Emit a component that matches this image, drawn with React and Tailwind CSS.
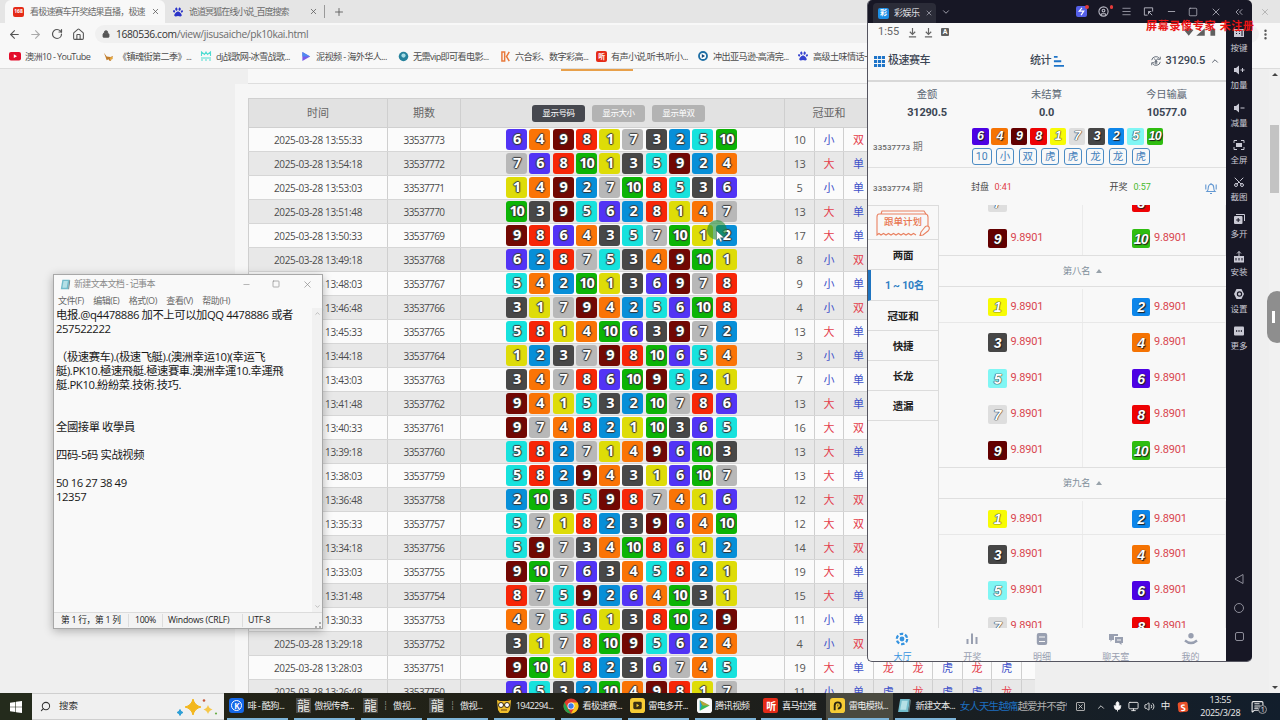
import React from 'react';
import {
  ArrowLeft, ArrowRight, RotateCw, House, Lock, X, Plus, Minus, Square, ChevronDown, ChevronUp, ChevronsLeft,
  Menu, Search, CircleUser, Mic, Volume2, Scissors, MoreVertical, Monitor, MessageSquareText,
} from 'lucide-react';
import { FaPaw } from 'react-icons/fa';

const DRAWS = [
  [6, 4, 9, 8, 1, 7, 3, 2, 5, 10],
  [7, 6, 8, 10, 1, 3, 5, 9, 2, 4],
  [1, 4, 9, 2, 7, 10, 8, 5, 3, 6],
  [10, 3, 9, 5, 6, 2, 8, 1, 4, 7],
  [9, 8, 6, 4, 3, 5, 7, 10, 1, 2],
  [6, 2, 8, 7, 5, 3, 4, 9, 10, 1],
  [5, 4, 2, 10, 1, 3, 6, 9, 7, 8],
  [3, 1, 7, 9, 4, 2, 5, 6, 10, 8],
  [5, 8, 1, 4, 10, 6, 3, 9, 7, 2],
  [1, 2, 3, 7, 9, 8, 10, 6, 5, 4],
  [3, 4, 7, 8, 6, 10, 9, 5, 2, 1],
  [9, 4, 1, 5, 3, 2, 10, 7, 8, 6],
  [9, 7, 4, 8, 2, 1, 10, 3, 6, 5],
  [5, 8, 2, 7, 1, 4, 9, 6, 10, 3],
  [5, 8, 2, 9, 4, 3, 1, 6, 10, 7],
  [2, 10, 3, 5, 9, 8, 7, 4, 1, 6],
  [5, 7, 1, 8, 2, 3, 9, 6, 4, 10],
  [5, 9, 7, 3, 4, 10, 8, 6, 1, 2],
  [9, 10, 7, 6, 3, 4, 5, 8, 2, 1],
  [8, 7, 5, 9, 2, 6, 4, 10, 3, 1],
  [4, 7, 5, 6, 1, 3, 8, 10, 2, 9],
  [3, 1, 7, 8, 10, 9, 5, 6, 2, 4],
  [9, 10, 1, 8, 2, 3, 6, 7, 4, 5],
  [6, 5, 3, 2, 10, 4, 9, 8, 1, 7],
];

const WEB_BALL = {
  1: 'bg-[#dedc08]', 2: 'bg-[#078fd8]', 3: 'bg-[#484848]', 4: 'bg-[#fa7406]', 5: 'bg-[#17e2dd]',
  6: 'bg-[#5234f5]', 7: 'bg-[#b8b8b8]', 8: 'bg-[#f72607]', 9: 'bg-[#720803]', 10: 'bg-[#0cb406]',
};

const APP_BALL = {
  1: 'bg-[#f7fb05]', 2: 'bg-[#0d86ea]', 3: 'bg-[#464646]', 4: 'bg-[#f57303]', 5: 'bg-[#80f6f4]',
  6: 'bg-[#4c02e4]', 7: 'bg-[#dedede]', 8: 'bg-[#ee0204]', 9: 'bg-[#630000]', 10: 'bg-[#2fbd10]',
};

const OUTLINE = '[text-shadow:0_0_1px_#333,1px_0_1px_#333,-1px_0_1px_#444,0_1px_1px_#333,0_-1px_1px_#444]';

// a draw every 75 seconds, newest first
function drawTime(i) {
  const t = 13 * 3600 + 55 * 60 + 33 - i * 75;
  const pad = (n) => String(n).padStart(2, '0');
  return `2025-03-28 ${pad(Math.floor(t / 3600))}:${pad(Math.floor(t / 60) % 60)}:${pad(t % 60)}`;
}

function Mark({ text, red }) {
  return <span className={red ? 'text-[#e4404c]' : 'text-[#3f51c9]'}>{text}</span>;
}

function Cell({ className, children }) {
  return <div className={`flex h-full shrink-0 items-center justify-center border-r border-[#cfcfcf] pt-px ${className}`}>{children}</div>;
}

function DrawRow({ balls, index }) {
  const sum = balls[0] + balls[1];
  return (
    <div className={`flex h-6 border-b border-[#d6d6d6] text-[10px] text-[#555] ${index % 2 ? 'bg-[#e8e8e8]' : 'bg-[#fbfbfb]'}`}>
      <Cell className="w-[140px] border-l tracking-[-0.33px] text-[#4c4c4c]">{drawTime(index)}</Cell>
      <Cell className="w-[73px] tracking-[-0.62px] text-[#4c4c4c]">{33537773 - index}</Cell>
      <Cell className="w-[324px] justify-start! pt-0! pl-[45px]">
        <div className="flex gap-[2.3px]">
          {balls.map((n) => (
            <span key={n} className={`flex size-[21px] items-center justify-center rounded-[3px] text-[14.5px] leading-none font-bold tracking-[-1.2px] text-white ${OUTLINE} ${WEB_BALL[n]}`}>{n}</span>
          ))}
        </div>
      </Cell>
      <Cell className="w-[30px] text-[11px] tracking-[-0.5px]">{sum}</Cell>
      <Cell className="w-[29px] text-[11px]"><Mark text={sum > 11 ? '大' : '小'} red={sum > 11} /></Cell>
      <Cell className="w-[30px] text-[11px]"><Mark text={sum % 2 ? '单' : '双'} red={sum % 2 === 0} /></Cell>
      {[0, 1, 2, 3, 4].map((k) => (
        <Cell key={k} className="w-[29.6px] text-[11px]">
          <Mark text={balls[k] > balls[9 - k] ? '龙' : '虎'} red={balls[k] > balls[9 - k]} />
        </Cell>
      ))}
    </div>
  );
}

function HeadButton({ children, active }) {
  return (
    <span className={`flex h-[17px] w-[53px] items-center justify-center rounded-[3px] text-[8.5px] tracking-[-0.4px] text-white ${active ? 'bg-[#46484f]' : 'bg-[#b3b3b3]'}`}>
      {children}
    </span>
  );
}

function YoutubeIcon() {
  return (
    <svg viewBox="0 0 12 12" className="size-[12px]"><rect y="2" width="12" height="8.4" rx="2" fill="#e30d2b" /><path d="M4.8 4.3v3.8L8 6.2z" fill="#fff" /></svg>
  );
}

function RedBadge({ children, className = 'size-[11px] text-[7px]' }) {
  return <span className={`flex items-center justify-center rounded-[2px] bg-[#e52b18] leading-none font-bold text-white ${className}`}>{children}</span>;
}

const BOOKMARKS = [
  { w: 'w-[94px]', gap: 'gap-[4px]', text: '澳洲10 - YouTube', icon: <YoutubeIcon /> },
  {
    w: 'w-[97px]', gap: 'gap-[4px]', text: '《镇魂街第二季》...',
    icon: <svg viewBox="0 0 12 12" className="size-[11px]"><path d="M1 2l3 4 4 .5 3-1-1 2-2 1 1 2H7L6 9 4 10 3 7z" fill="#c07a28" /><circle cx="9" cy="8" r="1.5" fill="#e4a63c" /></svg>,
  },
  {
    w: 'w-[101px]', gap: 'gap-[4px]', text: 'dj战歌网-冰雪战歌...',
    icon: <svg viewBox="0 0 12 12" className="size-[12px]" fill="none" stroke="#4fdcd2" strokeWidth="1.1"><path d="M1.500 6V2l3 2.500 1.500-2.500 1.500 2.500 3-2.500v4M1 10h2M5 10h2M9 10h2M1 8h10" /></svg>,
  },
  {
    w: 'w-[97px]', gap: 'gap-[4px]', text: '泥视频 - 海外华人...',
    icon: <svg viewBox="0 0 12 12" className="size-[11px]"><path d="M1.5 1v10L10 6z" fill="#7a5be8" /><path d="M1.5 1v5H10z" fill="#4c8cf0" /></svg>,
  },
  {
    w: 'w-[103px]', gap: 'gap-[4px]', text: '无需vip即可看电影...',
    icon: <svg viewBox="0 0 12 12" className="size-[11px]"><circle cx="6" cy="6" r="5.2" fill="#26829c" /><circle cx="6" cy="5" r="2.3" fill="#a6dce6" /></svg>,
  },
  {
    w: 'w-[95px]', gap: 'gap-[3px]', text: '六合彩、数字彩高...',
    icon: <svg viewBox="0 0 12 12" className="size-[11px]" fill="none" stroke="#e8793b" strokeWidth="1.6"><path d="M1 1v10h3V1zM9 1L6 6l3 5" /></svg>,
  },
  { w: 'w-[102px]', gap: 'gap-[4px]', text: '有声小说,听书,听小...', icon: <RedBadge>听</RedBadge> },
  {
    w: 'w-[100px]', gap: 'gap-[5px]', text: '冲出亚马逊-高清完...',
    icon: <svg viewBox="0 0 12 12" className="size-[10px]"><circle cx="6" cy="6" r="4.8" fill="#fff" stroke="#1f6fa5" strokeWidth="2.2" /><path d="M4.6 3.6v4.8L8.4 6z" fill="#174a7a" /></svg>,
  },
  { w: 'w-[80px]', gap: 'gap-[5px]', text: '高级土味情话一', icon: <FaPaw className="size-[10px] shrink-0 text-[#3542cf]" /> },
];

function Browser() {
  return (
    <div className="flex h-[693px] w-full flex-col bg-[#efefef]">
      <div className="flex h-[23px] shrink-0 items-center bg-[#e5e5e5] text-[9px] text-[#6a6a6a]">
        <div className="ml-[5px] flex h-full w-[160px] items-center rounded-t-md bg-[#f8f8f8] pl-2">
          <RedBadge className="h-[10px] w-[11px] text-[5px]">168</RedBadge>
          <span className="ml-[6px] w-[118px] tracking-[-0.8px] whitespace-nowrap">看极速赛车开奖结果直播，极速</span>
          <X className="ml-[3px] size-[9px] text-[#555]" />
        </div>
        <FaPaw className="ml-[8px] size-[10px] text-[#2a33c8]" />
        <span className="ml-[6px] w-[120px] tracking-[-0.95px] whitespace-nowrap">诡道冥狐在线小说_百度搜索</span>
        <X className="size-[9px] text-[#555]" />
        <span className="ml-[6px] h-[13px] w-px bg-[#999]" />
        <Plus className="ml-[8px] size-[12px] text-[#555]" strokeWidth={1.7} />
        <X className="mr-[10px] ml-auto size-[10px] text-[#999]" strokeWidth={1.5} />
      </div>
      <div className="flex h-[22px] shrink-0 items-center bg-[#f8f8f8] text-[#555]">
        <ArrowLeft className="ml-[8px] size-[13px]" />
        <ArrowRight className="ml-[8px] size-[13px] text-[#aaa]" />
        <RotateCw className="ml-[9px] size-[12px]" strokeWidth={2.4} />
        <House className="ml-[9px] size-[13px]" />
        <div className="ml-[10px] flex h-[18px] flex-1 items-center rounded-full bg-[#f0f0f0] pl-[7px]">
          <Lock className="size-[8px]" fill="currentColor" strokeWidth={2.5} />
          <span className="ml-[6px] pt-px text-[10.3px] tracking-[-0.35px] text-[#333]">1680536.com<span className="text-[#6c6c6c]">/view/jisusaiche/pk10kai.html</span></span>
        </div>
        <MoreVertical className="mr-[8px] size-[13px]" strokeWidth={2.5} />
      </div>
      <div className="flex h-[24px] shrink-0 items-center border-b border-[#dcdcdc] bg-[#f8f8f8] pl-[9px] text-[9.1px] tracking-[-0.6px] text-[#4c4c4c]">
        {BOOKMARKS.map((b) => (
          <div key={b.text} className={`flex shrink-0 items-center whitespace-nowrap ${b.w} ${b.gap}`}>{b.icon}<span>{b.text}</span></div>
        ))}
      </div>
      <div className="flex min-h-0 flex-1">
        <div className="ml-[235px] flex min-h-0 w-[800px] flex-col">
          <div className="ml-[13px] h-[15px] shrink-0 border-b border-[#dedede] bg-[#f8f8f8]">
            <div className="ml-[313px] h-[2px] w-[72px] bg-[#e8a04a]" />
          </div>
          <div className="min-h-0 flex-1 overflow-hidden bg-[#f6f6f6] pt-[14px] pl-[13px]">
            <div className="flex h-[30px] border-y border-[#d0d0d0] bg-[#e2e2e2] text-[11px] text-[#666]">
              <Cell className="w-[140px] border-l">时间</Cell>
              <Cell className="w-[73px]">期数</Cell>
              <Cell className="w-[324px] justify-start! gap-[7px] pl-[71px]">
                <HeadButton active>显示号码</HeadButton>
                <HeadButton>显示大小</HeadButton>
                <HeadButton>显示单双</HeadButton>
              </Cell>
              <Cell className="w-[89px]">冠亚和</Cell>
            </div>
            {DRAWS.map((balls, i) => <DrawRow key={i} balls={balls} index={i} />)}
          </div>
        </div>
        <div className="ml-auto flex w-[11px] flex-col items-center justify-between bg-[#f1f1f1] py-[4px]">
          <span className="border-x-[3px] border-b-[3px] border-x-transparent border-b-[#444]" />
          <span className="-mt-[444px] h-[68px] w-[9px] bg-[#c3c3c3]" />
          <span className="border-x-[3px] border-t-[3px] border-x-transparent border-t-[#444]" />
        </div>
      </div>
    </div>
  );
}

const NOTE_LINES = [
  '电报.@q4478886 加不上可以加QQ 4478886 或者', '257522222', '', '（极速赛车).(极速飞艇).(澳洲幸运10)(幸运飞',
  '艇).PK10.極速飛艇.極速賽車.澳洲幸運10.幸運飛', '艇.PK10.紛紛菜.技術.技巧.', '', '', '全國接單 收學員', '',
  '四码-5码 实战视频', '', '50 16 27 38 49', '12357',
];

function NoteIcon({ className }) {
  return (
    <svg viewBox="0 0 14 14" className={className}><path d="M3 1h9l-1.5 12H1z" fill="#72bccb" /><path d="M4.5 2.5H10L8.5 11H3z" fill="#b4e0e6" /><path d="M12 1l1 1-1.5 11h-1z" fill="#687c80" /></svg>
  );
}

function Notepad() {
  return (
    <div className="absolute top-[274px] left-[53px] flex h-[355px] w-[270px] flex-col border border-[#a8a8a8] bg-[#f9f9f9] shadow-[0_2px_9px_rgba(0,0,0,0.28)]">
      <div className="flex h-[18px] items-center text-[9px] text-[#8a8a8a]">
        <NoteIcon className="ml-[6px] size-[11px]" />
        <span className="ml-[3px] tracking-[-0.65px]">新建文本文档 - 记事本</span>
        <Minus className="ml-auto size-[9px]" strokeWidth={1.6} />
        <Square className="ml-[21px] size-[8px]" strokeWidth={2} />
        <X className="mr-[9px] ml-[22px] size-[11px]" strokeWidth={1.5} />
      </div>
      <div className="flex h-[15px] items-center gap-[9.5px] pl-[4px] text-[9px] tracking-[-0.45px] text-[#666]">
        <span>文件(F)</span><span>编辑(E)</span><span>格式(O)</span><span>查看(V)</span><span>帮助(H)</span>
      </div>
      <div className="flex flex-1">
        <div className="flex-1 pl-[2px] text-[11.3px] leading-[14px] tracking-[-0.4px] text-[#181818]">
          {NOTE_LINES.map((line, i) => <div key={i} className="h-[14px] whitespace-nowrap">{line}</div>)}
        </div>
        <div className="flex w-[10px] flex-col items-center justify-between bg-[#f1f1f1] py-[2px] text-[#999]">
          <ChevronUp className="size-[7px]" />
          <ChevronDown className="size-[7px]" />
        </div>
      </div>
      <div className="flex h-[16px] items-center border-t border-[#dcdcdc] bg-[#f3f3f3] text-[8.7px] text-[#222]">
        <span className="w-[75px] border-r border-[#ddd] pl-[7px] tracking-[-0.25px] whitespace-nowrap">第 1 行，第 1 列</span>
        <span className="w-[34px] border-r border-[#ddd] pl-[6px] tracking-[-0.3px]">100%</span>
        <span className="w-[80px] border-r border-[#ddd] pl-[5px] tracking-[-0.2px] whitespace-nowrap">Windows (CRLF)</span>
        <span className="pl-[5px] tracking-[-0.2px]">UTF-8</span>
        <span className="mt-auto mr-px ml-auto size-[6px] border-r-2 border-b-2 border-dotted border-[#aaa]" />
      </div>
    </div>
  );
}

function AppBall({ n, className = 'size-[18.5px] text-[14px]' }) {
  const pale = n === 1 || n === 5 || n === 7;
  return (
    <span className={`flex shrink-0 items-center justify-center rounded-[2px] font-['Liberation_Sans',sans-serif] leading-none font-bold tracking-[-0.7px] text-white italic ${pale ? '[text-shadow:0_0_1px_#222,0_0_1px_#333,0_0_1px_#444]' : '[text-shadow:0_0_1px_#111,1px_1px_1px_#222]'} ${APP_BALL[n]} ${className}`}>{n}</span>
  );
}

function OddsCell({ n }) {
  return (
    <div className="flex w-[143.5px] items-center gap-[4px] border-r border-[#ebebeb] pt-[3px] pl-[49px]">
      <AppBall n={n} />
      <span className="text-[11px] tracking-[-0.2px] text-[#d9464f]">9.8901</span>
    </div>
  );
}

function OddsRow({ a, line }) {
  return (
    <div className={`flex h-9 shrink-0 ${line ? 'border-b border-[#e8e8e8] pt-[2px]' : ''}`}>
      <OddsCell n={a} />
      <OddsCell n={a + 1} />
    </div>
  );
}

function OddsGroup({ title }) {
  return (
    <>
      <div className="flex h-8 shrink-0 items-center justify-center gap-[6px] border-y border-[#dfdfdf] text-[9.5px] tracking-[-0.3px] text-[#82909c]">
        {title}<span className="border-x-[3.5px] border-b-[4px] border-x-transparent border-b-[#98a2aa]" />
      </div>
      {[1, 3, 5, 7, 9].map((a) => <OddsRow key={a} a={a} line={a === 1} />)}
    </>
  );
}

function CopyPlan() {
  return (
    <div className="flex h-[34px] items-center justify-center border-b border-[#dcdcdc]">
      <div className="relative flex h-[26px] w-[54px] items-center justify-center text-[9.5px] font-medium text-[#e8744f]">
        <svg viewBox="0 0 54 26" className="absolute inset-0" fill="none" stroke="#e98060" strokeWidth="1.1">
          <path d="M5 4l1-3h42l2 3M3 4h46q3 0 3 3v9M3 4q-2 0-2 3v18l2-1.500 2 1.500 2.500-1.500 2.500 1.500 2.500-1.500 2.500 1.500 2.500-1.500 2.500 1.500 2.500-1.500 2.500 1.500 2.500-1.500 2.500 1.500 2.500-1.500 2.500 1.500 2.500-1.500 2.500 1.500" />
          <path d="M45 22l4-5q2-2 4 0 1 2-1 4l-5 4-3 .5z" />
        </svg>
        跟单计划
      </div>
    </div>
  );
}

const MENU = [
  { text: '两面', h: 'h-[30px]' }, { text: '1 ~ 10名', h: 'h-[31px]', active: true }, { text: '冠亚和', h: 'h-[30px]' },
  { text: '快捷', h: 'h-[30px]' }, { text: '长龙', h: 'h-[30px]' }, { text: '遗漏', h: 'h-[30px]' },
];

const TOOL_ICONS = {
  keys: <><path d="M1 2h10v8H1z" fill="currentColor" /><path d="M3 4h1M6 4h1M3 6.500h1M6 6.500h1M9 3v6" stroke="#171725" /></>,
  up: <><path d="M1 4h2l3-2.500v9L3 8H1z" fill="currentColor" /><path d="M7.500 6h4M9.500 4v4" stroke="currentColor" /></>,
  down: <><path d="M1 4h2l3-2.500v9L3 8H1z" fill="currentColor" /><path d="M7.500 6h4" stroke="currentColor" /></>,
  full: <><path d="M1 4V1.500h3M8 1.500h3V4M11 8v2.500H8M4 10.500H1V8" fill="none" stroke="currentColor" /><rect x="3" y="4" width="6" height="4" fill="currentColor" /></>,
  multi: <><path d="M3 1.500h8.500V8" fill="none" stroke="currentColor" /><rect x="1" y="3" width="8.500" height="8" rx="1" fill="currentColor" /><path d="M5.200 5v4M3.200 7h4" stroke="#171725" /></>,
  apk: <><path d="M1 5h10v6.500H1z" fill="currentColor" /><path d="M6 5V.5M4 2.500L6 .5l2 2" fill="none" stroke="currentColor" /><path d="M3 7v2.500M6 7v2.500M9 7v2.500" stroke="#171725" /></>,
  gear: <><path d="M3.500 1h5L11 6l-2.500 5h-5L1 6z" fill="currentColor" /><circle cx="6.500" cy="6" r="2.700" fill="#171725" /><circle cx="6.500" cy="6" r="1.500" fill="currentColor" /></>,
  more: <><rect x="1" y="1.500" width="10" height="9" rx="1" fill="currentColor" /><path d="M3 6h1.200M5.400 6h1.200M7.800 6H9" stroke="#171725" strokeWidth="1.300" /></>,
};

function Tool({ icon, label }) {
  return (
    <div className="flex h-[37.3px] flex-col items-center gap-[5px] text-[8.5px] leading-none text-[#c9c9d4]">
      {icon === 'cut' ? <Scissors className="size-[12px] -rotate-90" /> : <svg viewBox="0 0 12 12" className="size-[12px]">{TOOL_ICONS[icon]}</svg>}
      <span>{label}</span>
    </div>
  );
}

const TOOLS = [
  ['keys', '按键'], ['up', '加量'], ['down', '减量'], ['full', '全屏'], ['cut', '截图'],
  ['multi', '多开'], ['apk', '安装'], ['gear', '设置'], ['more', '更多'],
];

function NavItem({ label, active, children, className }) {
  return (
    <div className={`flex flex-col items-center ${className} ${active ? 'text-[#3593e0]' : 'text-[#989fb0]'}`}>
      <svg viewBox="0 0 14 14" className="size-[14px] shrink-0">{children}</svg>
      <span className="mt-[4.5px] text-[9px] leading-[13px] whitespace-nowrap">{label}</span>
    </div>
  );
}

function Stat({ label, value, className }) {
  return (
    <div className={`flex flex-col items-center ${className}`}>
      <span className="text-[10.3px] leading-[18px] text-[#5a6673]">{label}</span>
      <span className="text-[11px] leading-[17px] font-bold tracking-[-0.2px] text-[#3c4654]">{value}</span>
    </div>
  );
}

function DownloadMark({ className }) {
  return (
    <svg viewBox="0 0 10 12" className={`h-[11px] w-[9px] ${className}`} fill="none" stroke="currentColor" strokeWidth="1.300"><path d="M5 1v7M2 5.200l3 3 3-3M1 10.800h8" /></svg>
  );
}

function Emulator() {
  return (
    <div className="absolute top-0 left-[867px] flex h-[662px] w-[385px] flex-col overflow-hidden rounded-[5px] border-b border-l border-[#555560] bg-[#f8f8f8]">
      <div className="flex h-[23px] shrink-0 items-center bg-[#171725] text-[#b9b9c4]">
        <div className="mt-[3px] ml-[5px] flex h-[20px] w-[63px] items-center rounded-t bg-[#2b2c38] text-[9px]">
          <span className="ml-[5px] flex size-[11px] items-center justify-center rounded-[2px] bg-[#1c8fe6] text-[7px] font-bold text-white">彩</span>
          <span className="ml-[5px] tracking-[-0.5px] text-[#e2e2e6]">彩娱乐</span>
          <X className="ml-[5px] size-[8px]" />
        </div>
        <ChevronDown className="ml-[5px] size-[10px]" />
        <div className="mr-[7px] ml-auto flex items-center gap-[11.5px]">
          <span className="relative flex size-[11px] items-center justify-center rounded-[2px] bg-[#5560e8] text-white">
            <svg viewBox="0 0 10 10" className="size-[9px]" fill="none" stroke="currentColor" strokeWidth="1.300"><path d="M5.500 1L2.500 4.500h5L4.500 9" /></svg>
            <i className="absolute -top-[1px] -right-[2px] size-[3.5px] rounded-full bg-[#e23a3a]" />
          </span>
          <span className="relative"><CircleUser className="size-[11px]" strokeWidth={2.4} /><i className="absolute -top-px -right-[4px] size-[3.5px] rounded-full bg-[#e23a3a]" /></span>
          <Menu className="size-[11px]" strokeWidth={1.6} />
          <svg viewBox="0 0 12 12" className="size-[11px]" fill="none" stroke="currentColor"><path d="M10.500 6V2h-9v8H5M6 6l4 4M6 9V6h3" /></svg>
          <Minus className="size-[11px]" strokeWidth={1.8} />
          <Square className="size-[10px]" strokeWidth={1.8} />
          <X className="size-[12px]" strokeWidth={1.6} />
          <ChevronsLeft className="size-[12px]" strokeWidth={1.6} />
        </div>
      </div>
      <div className="flex min-h-0 flex-1">
        <div className="flex min-h-0 w-[358px] flex-col font-['Roboto','Noto_Sans_CJK_SC',sans-serif]">
          <div className="flex h-[18px] shrink-0 items-center pl-[10px] text-[11px] text-[#666]">
            1:55
            <DownloadMark className="ml-[9px]" />
            <DownloadMark className="ml-[7px]" />
            <span className="ml-[8px] flex size-[8px] items-center justify-center rounded-[1px] bg-[#606060] text-[7px] font-bold text-white">A</span>
            <svg viewBox="0 0 36 10" className="mr-[8px] ml-auto h-[10px] w-[34px]" fill="#606060"><path d="M0 3q5-4 10 0L5 9zM13 9h9V1zM28 1.500h5V9h-5z" /></svg>
          </div>
          <div className="flex h-[41px] shrink-0 items-center border-b-2 border-[#d8d8d8] pt-px text-[11px] font-medium text-[#3c4654]">
            <svg viewBox="0 0 12 12" className="ml-[6px] size-[11px]" fill="#1e74c8"><path d="M0 0h3.400v3.400H0zM4.300 0h3.400v3.400H4.300zM8.600 0H12v3.400H8.600zM0 4.300h3.400v3.400H0zM4.300 4.300h3.400v3.400H4.300zM8.600 4.300H12v3.400H8.600zM0 8.600h3.400V12H0zM4.300 8.600h3.400V12H4.300zM8.600 8.600H12V12H8.600z" /></svg>
            <span className="ml-[3px] tracking-[-0.5px]">极速赛车</span>
            <span className="ml-[100px] tracking-[-0.5px]">统计</span>
            <svg viewBox="0 0 12 12" className="ml-[2px] size-[11px]" fill="#1e74c8"><path d="M1 0h4v2H1zM1 4.500h8v2.300H1zM1 9.800h11v1.800H1z" /></svg>
            <svg viewBox="0 0 14 14" className="mr-[3px] ml-auto size-[12px]" fill="none" stroke="#555f6c"><path d="M2 6a5 5 0 0 1 9-2M12 2v3H9M12 8a5 5 0 0 1-9 2M2 12V9h3M5 4l2 3 2-3M7 7v4M5.300 7.700h3.400M5.300 9.300h3.400" /></svg>
            <span className="tracking-[-0.15px]">31290.5</span>
            <ChevronUp className="mr-[6px] ml-[5px] size-[10px]" />
          </div>
          <div className="flex h-[42px] shrink-0 pt-[4px]">
            <Stat className="w-[118px]" label="金额" value="31290.5" />
            <Stat className="w-[121px]" label="未结算" value="0.0" />
            <Stat className="w-[119px]" label="今日输赢" value="10577.0" />
          </div>
          <div className="flex h-[44px] shrink-0 border-b border-[#e0e0e0] pl-[5px]">
            <span className="mt-[15px] w-[99px] text-[10px] leading-[16px] text-[#777]"><b className="text-[8px] font-medium tracking-[0.1px] text-[#666]">33537773</b> 期</span>
            <div className="pt-[4px]">
              <div className="flex gap-[2.9px]">
                {DRAWS[0].map((n) => <AppBall key={n} n={n} className="size-[16.5px] text-[12.5px]" />)}
              </div>
              <div className="mt-[3.5px] flex gap-[4.6px]">
                {['10', '小', '双', '虎', '虎', '龙', '龙', '虎'].map((t, i) => (
                  <span key={i} className={`flex h-[17px] items-center justify-center rounded-[3px] border border-[#4c8cc4] pt-[2px] text-[10.5px] leading-none text-[#4380bb] ${i ? 'w-[18px]' : 'w-[19.5px]'}`}>{t}</span>
                ))}
              </div>
            </div>
          </div>
          <div className="flex h-[37px] shrink-0 items-center pt-[2px] pl-[5px] text-[9px] text-[#444]">
            <span className="w-[98px] text-[10px] text-[#777]"><b className="text-[8px] font-medium tracking-[0.1px] text-[#666]">33537774</b> 期</span>
            <span className="w-[23.5px]">封盘</span><span className="w-[115px] text-[#e04046]">0:41</span>
            <span className="w-[24px]">开奖</span><span className="text-[#49b92e]">0:57</span>
            <svg viewBox="0 0 14 14" className="mr-[8px] ml-auto size-[14px]" fill="none" stroke="#6398d2" strokeWidth="1.1"><path d="M3 10.500q1.300-1.200 1.300-4a2.700 3.200 0 0 1 5.400 0q0 2.800 1.300 4zM6 12.500h2M7 3.200V2M1.800 3.500v5M12.200 3.500v5" /></svg>
          </div>
          <div className="flex h-[423px] shrink-0">
            <div className="w-[71px] shrink-0 border-t border-r border-[#dcdcdc]">
              <CopyPlan />
              {MENU.map((m) => (
                <div key={m.text} className={`flex items-center justify-center border-b border-[#dcdcdc] pt-[2px] text-[10.5px] font-bold tracking-[-0.2px] ${m.h} ${m.active ? 'border-l-[3px] border-l-[#1e74c0] text-[#2e7fc4]' : 'text-[#222]'}`}>{m.text}</div>
              ))}
            </div>
            <div className="flex w-[287px] flex-col overflow-hidden">
              <div className="flex h-[50px] shrink-0 flex-col justify-end overflow-hidden">
                <OddsRow a={7} />
                <OddsRow a={9} />
              </div>
              <OddsGroup title="第八名" />
              <OddsGroup title="第九名" />
            </div>
          </div>
          <div className="flex min-h-0 flex-1 overflow-hidden pt-[4px]">
            <NavItem className="w-[69px]" label="大厅" active>
              <circle cx="7" cy="7" r="5.200" fill="none" stroke="currentColor" strokeWidth="2.200" strokeDasharray="3.500 1.900" /><circle cx="7" cy="7" r="2.400" fill="currentColor" />
            </NavItem>
            <NavItem className="w-[71px]" label="开奖"><path d="M2.500 7v5M7 1.500V12M11.500 5v7" stroke="currentColor" strokeWidth="2" /></NavItem>
            <NavItem className="w-[69px]" label="明细">
              <rect x="1.800" y="1" width="10.400" height="12" rx="2" fill="currentColor" /><path d="M4 5h6M4 9.500h6" stroke="#f8f8f8" />
            </NavItem>
            <NavItem className="w-[79px]" label="聊天室">
              <path d="M0 2h9v2H5v4H3l-1.500 2V8H0z" fill="currentColor" /><path d="M6 5h8v6h-1.500v2L10 11H6z" fill="currentColor" /><path d="M8 8h4" stroke="#f8f8f8" />
            </NavItem>
            <NavItem className="w-[71px]" label="我的">
              <circle cx="7" cy="3.800" r="2.700" fill="currentColor" /><path d="M1 8.500q6 5 12 0" fill="none" stroke="currentColor" strokeWidth="2.300" />
            </NavItem>
          </div>
        </div>
        <div className="flex w-[26px] flex-col bg-[#171725] pt-[4px] text-[#b4b4c6]">
          {TOOLS.map(([icon, label]) => <Tool key={icon} icon={icon} label={label} />)}
          <div className="mt-auto mb-[20px] flex flex-col items-center gap-[19px]">
            <svg viewBox="0 0 10 10" className="size-[10px]" fill="none" stroke="#8d8d99"><path d="M9 .5v9L1 5z" /></svg>
            <span className="size-[10px] rounded-full border border-[#8d8d99]" />
            <span className="size-[9px] rounded-[2px] border border-[#8d8d99]" />
          </div>
        </div>
      </div>
    </div>
  );
}

function QrGlyph() {
  return <span className="flex size-[15px] items-center justify-center bg-[#4a4a46] text-[13px] leading-none text-[#e8e8e4]">龍</span>;
}

const TASKS = [
  { text: '啡 - 酷狗...', icon: <span className="flex size-[15px] items-center justify-center rounded-[3px] bg-[#1568e8]"><span className="flex size-[11px] items-center justify-center rounded-full border border-white text-[8px] leading-none font-bold text-white">K</span></span> },
  { text: '傲视传奇...', icon: <QrGlyph /> },
  { text: '┊  傲视...', icon: <QrGlyph /> },
  { text: '┊  傲视...', icon: <QrGlyph /> },
  {
    text: '1942294...',
    icon: <svg viewBox="0 0 16 16" className="size-[16px]"><path d="M1 2l3 1h8l3-1-1 10-2 3H4l-2-3z" fill="#efbd2b" /><circle cx="5" cy="7" r="2.500" fill="#fff" stroke="#3a2a10" /><circle cx="11" cy="7" r="2.500" fill="#fff" stroke="#3a2a10" /><path d="M5 12h6" stroke="#6a4210" /></svg>,
  },
  {
    text: '看极速赛...',
    icon: <svg viewBox="0 0 16 16" className="size-[16px]"><circle cx="8" cy="8" r="7.500" fill="#e33b2e" /><path d="M1.500 4.300L5 11l3 4.500A7.500 7.500 0 0 1 1.500 4.300z" fill="#26a14b" /><path d="M8 4.500h6.600A7.500 7.500 0 0 1 8 15.500l3.500-6z" fill="#f8c81c" /><circle cx="8" cy="8" r="3.500" fill="#fff" /><circle cx="8" cy="8" r="2.700" fill="#3b7de8" /></svg>,
  },
  { text: '雷电多开...', icon: <svg viewBox="0 0 16 16" className="size-[15px]"><rect width="16" height="16" rx="3" fill="#f6cc35" /><rect x="3.500" y="4" width="9" height="8" rx="1.500" fill="#3a3014" /><path d="M7 6.200v3.600L9.800 8z" fill="#f6cc35" /></svg> },
  { text: '腾讯视频', icon: <svg viewBox="0 0 16 16" className="size-[15px]"><rect width="16" height="16" rx="3" fill="#fafafa" /><path d="M3 2.500v11L13.500 8z" fill="#35bb58" /><path d="M3 2.500v11L5 8z" fill="#2b9ae8" /><path d="M3 2.500L13.500 8H6z" fill="#f4962c" opacity=".7" /></svg> },
  { text: '喜马拉雅', icon: <RedBadge className="size-[15px] text-[10px]">听</RedBadge> },
  { text: '雷电模拟...', active: true, icon: <svg viewBox="0 0 16 16" className="size-[15px]"><rect width="16" height="16" rx="3" fill="#f6cc35" /><path d="M5 13V8a3.300 3.300 0 1 1 3.300 3.300M8 8h.8" fill="none" stroke="#2c2610" strokeWidth="2" /></svg> },
  { text: '新建文本...', icon: <NoteIcon className="size-[15px]" /> },
];

function Taskbar() {
  return (
    <div className="flex h-[27px] w-full bg-linear-to-r from-[#242619] via-[#201f17] to-[#121e2c] text-[10px] text-[#ececec]">
      <div className="flex w-8 items-center justify-center bg-[#242b1c]">
        <svg viewBox="0 0 12 12" className="size-[12px]" fill="#fff"><path d="M0 1.700l5.400-.8v4.800H0zM6 .8L12 0v5.700H6zM0 6.300h5.400v4.800L0 10.300zM6 6.300h6V12l-6-.8z" /></svg>
      </div>
      <div className="flex w-[192px] items-center border-t border-b border-[#cfcfcf] bg-[#f0f0f0] text-[#333]">
        <Search className="ml-[8px] size-[11px] -scale-x-100" strokeWidth={2.2} />
        <span className="ml-[8px] text-[9.5px]">搜索</span>
        <svg viewBox="0 0 42 18" className="mr-[6px] ml-auto h-[18px] w-[42px]">
          <path d="M17 1q1.500 6.500 8 8-6.500 1.500-8 8-1.500-6.500-8-8 6.500-1.500 8-8z" fill="#f3b71e" stroke="#f3b71e" strokeLinejoin="round" />
          <path d="M32 7q1 3.500 4.500 4.500Q33 12.500 32 16q-1-3.500-4.500-4.500Q31 10.500 32 7z" fill="#f6c84a" />
          <path d="M4 11.500q.6 2.400 3 3-2.400.6-3 3-.6-2.400-3-3 2.400-.6 3-3z" fill="#2d9fd6" stroke="#2d9fd6" />
          <circle cx="28" cy="2.500" r="1.300" fill="#c8583a" /><circle cx="40" cy="15.500" r="1.100" fill="#69ad4a" />
        </svg>
      </div>
      <div className="ml-[1px] flex">
        {TASKS.map((t, i) => (
          <div key={i} className={`flex w-[66.8px] flex-col ${t.active ? 'bg-[#4a4a40]' : ''}`}>
            <div className="flex flex-1 items-center pl-[4px] text-[9.2px] tracking-[-0.65px] whitespace-pre">{t.icon}<span className="ml-[3.5px]">{t.text}</span></div>
            <div className="ml-[2px] h-[2px] w-[61px] bg-[#7db4d8]" />
          </div>
        ))}
      </div>
      <div className="flex flex-1 items-center">
        <span className="w-[107px] overflow-hidden text-[10.5px] tracking-[-0.9px] whitespace-nowrap text-[#aeaeae]"><span className="text-[#1d6fc0]">女人天生越痛</span>越爱并不奇怪</span>
        <span className="ml-[9px] flex size-[9px] items-center justify-center rounded-[1px] border border-[#aaa] text-[#ccc]"><X className="size-[7px]" strokeWidth={3} /></span>
        <ChevronUp className="ml-[11px] size-[10px]" />
        <Mic className="ml-[6px] size-[11px]" fill="#fff" />
        <Monitor className="ml-[5px] size-[11px]" />
        <Volume2 className="ml-[5px] size-[11px]" />
        <span className="ml-[6px] text-[9.5px]">中</span>
        <span className="ml-[8px] flex size-[10px] -rotate-6 items-center justify-center rounded-[2px] bg-[#e8502a] text-[9px] leading-none font-bold text-white">S</span>
        <div className="ml-[11px] flex w-[42px] flex-col items-center text-[9px] leading-[12.5px] tracking-[-0.3px] whitespace-nowrap"><span>13:55</span><span>2025/3/28</span></div>
        <span className="relative ml-[10px]">
          <MessageSquareText className="size-[13px]" />
          <span className="absolute top-[5px] left-[7px] flex size-[9px] items-center justify-center rounded-full border border-[#999] bg-[#1b2634] text-[7px] leading-none">1</span>
        </span>
      </div>
    </div>
  );
}

export default function App() {
  return (
    <div className="relative h-[720px] w-[1280px] overflow-hidden font-['Open_Sans','Noto_Sans_CJK_SC',sans-serif]">
      <Browser />
      <Taskbar />
      <Notepad />
      <Emulator />
      {/* recorder watermark */}
      <div className="absolute top-[19px] left-[1146px] font-['Liberation_Serif','Noto_Sans_CJK_SC',serif] text-[11px] leading-[14px] font-bold tracking-[0.7px] whitespace-nowrap text-[#ec1414]">屏幕录像专家 未注册</div>
      {/* pull handle on the right edge */}
      <div className="absolute top-[291px] left-[1267px] flex h-[52px] w-[20px] items-center rounded-[10px] bg-[#8e8e8e] pl-[5px]"><span className="h-[12px] w-[2.5px] bg-white" /></div>
      {/* cursor */}
      <div className="absolute top-[220px] left-[707px] size-[20px] rounded-full bg-[#1c8a30]/60" />
      <svg viewBox="0 0 10 14" className="absolute top-[230px] left-[716px] h-[13px] w-[9px]"><path d="M.5.5v11l2.700-2.500 1.800 4 1.800-.8-1.800-3.900H9z" fill="#fff" stroke="#555" strokeWidth=".5" /></svg>
    </div>
  );
}
